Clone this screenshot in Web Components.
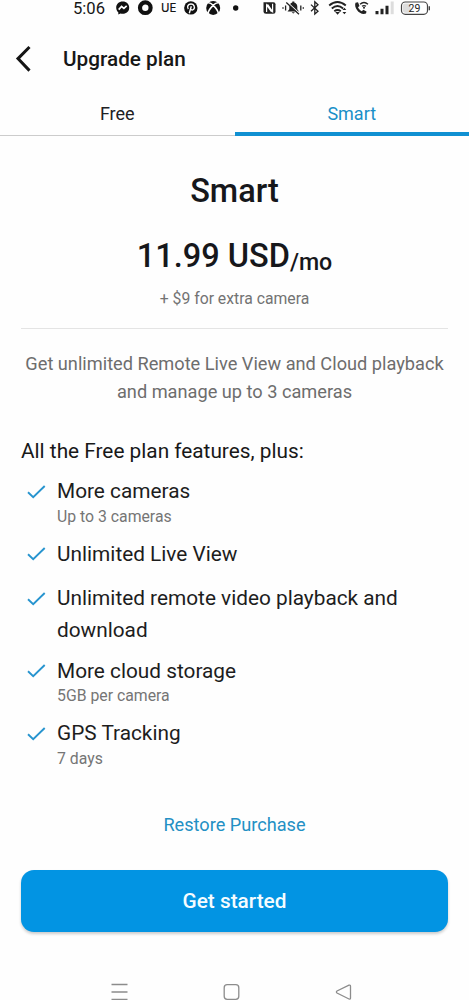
<!DOCTYPE html>
<html lang="en"><head><meta charset="utf-8"><title>Upgrade plan</title>
<style>html,body{margin:0;background:#fefefe}body{width:469px;height:1000px;overflow:hidden}</style></head><body>
<upgrade-screen></upgrade-screen>
<script>
const define=(name,css,html)=>customElements.define(name,class extends HTMLElement{
  constructor(){super();const t=document.createElement('template');
    t.innerHTML='<style>*{box-sizing:border-box}'+css+'</style>'+html;
    this.attachShadow({mode:'open'}).append(t.content.cloneNode(true));}
});

define('status-bar',`
:host{display:block;height:20px;padding-left:73px;color:#161616}
.row{display:flex;align-items:center;height:17px}
.time{font:16.6px/17px Roboto,sans-serif;width:43px;white-space:nowrap}
.ue{font:500 11.5px/17px Inter,sans-serif;width:22px;padding-left:0}
svg{display:block;flex:none}`,`
<div class="row"><span class="time">5:06</span>
<svg width="45" height="17" viewBox="0 0 45 17"><path d="M6.7 1.6C2.8 1.6.2 4.3.2 7.7c0 1.9.8 3.5 2.1 4.6v2.2l2.2-1c.7.2 1.4.3 2.2.3 3.9 0 6.5-2.7 6.5-6.1S10.600 1.600 6.700 1.600z" fill="#111"/><path d="M2.700 9.600 5.600 6.500 7.900 8.300 10.700 5.800" fill="none" stroke="#fff" stroke-width="1.700"/><circle cx="29.300" cy="7.700" r="5.300" fill="none" stroke="#111" stroke-width="4.200"/></svg>
<span class="ue">UE</span>
<svg width="62" height="17" viewBox="0 0 62 17"><circle cx="7.800" cy="7.900" r="6.700" fill="#111"/><path d="M5.300 9C3.700 6.800 5 4 8 4s4.200 3.200 2.800 5.100C9.800 10.400 8.300 10 7.900 9.200M8.300 6.300 6.300 13.300" fill="none" stroke="#fff" stroke-width="1.400"/><circle cx="30.200" cy="7.900" r="7" fill="#111"/><path d="M25 2.800c2.200-.2 4 1.300 5.200 2.500 1.200-1.200 3-2.700 5.200-2.500M25 13.500c.5-3.200 3-6.200 5.200-8.200 2.200 2 4.700 5 5.200 8.200" fill="none" stroke="#fff" stroke-width="1.600"/><circle cx="52.700" cy="8" r="2.700" fill="#111"/></svg>
<svg style="margin-left:17px" width="169" height="17" viewBox="262 0 169 17"><path d="M264 2.200h9.500q2 0 2 2v7.600q0 2-2 2H266q-2.500 0-2.500-2V2.200z" fill="#222"/><path d="M266.600 12V5l5 6.800M272.600 3.800v7.700L267.500 4.300" fill="none" stroke="#fff" stroke-width="1.200"/>
<path d="M287.500 11.500h11.500l-1.700-2.200V6.500c0-2-1.400-3.600-3-4V1.400h-2v1.100c-1.700.4-3 2-3 4v2.800zM291.700 12.300h3.200q-1.600 2.200-3.200 0z" fill="#222"/><path d="M287 2 300 14" stroke="#fff" stroke-width="1.200"/><path d="M286.300 2.500 299 14.200M285.600 5.500v5M283 7.300v1.500M300.800 5.500v5M303.300 7.300v1.500" fill="none" stroke="#222" stroke-width="1.300"/>
<path d="M311 4.600 318 11.200 314.800 14V1.800L318 4.700 311 11.300" fill="none" stroke="#222" stroke-width="1.300"/>
<path d="M329.200 5.500q8.200-7 16.600 0M331.800 8.400q5.700-4.700 11.300 0M334.300 11.200q3.300-2.500 6.500 0" fill="none" stroke="#222" stroke-width="1.900"/><path d="m335.200 12 2.400 2.700 2.300-2.700zM342.500 10l1.900-2.200 1.900 2.200zM342.500 12l1.900 2.200 1.900-2.200z" fill="#222"/>
<path d="M355.500 2.800 358 2.200l1.500 3.700-1.500 1.400c.8 1.700 2 3 3.800 3.900l1.500-1.500 3.200 1.700-.5 2.200c-6 2.300-12.500-5.500-10.500-10.800z" fill="#222"/><path d="M360 4.300q4-3.500 8 0M362 6.300q2-1.500 4 0" fill="none" stroke="#222" stroke-width="1.300"/><circle cx="364" cy="7.800" r="1" fill="#222"/>
<path d="M375.500 11h3v3.200h-3zM380.500 8.800h3v5.400h-3zM385.500 5.800h3v8.400h-3z" fill="#222"/><path d="M390.700 1.500h3v12.700h-3z" fill="#ddd"/>
<rect x="401.500" y="2" width="26" height="12.300" rx="3.800" fill="#fff" stroke="#444" stroke-width="1.200"/><rect x="403" y="3.500" width="7.500" height="9.300" rx="2" fill="#ddd"/><path d="M429.300 6.300v4" stroke="#444" stroke-width="1.400"/><text x="414.500" y="12" text-anchor="middle" font-family="Roboto,sans-serif" font-size="10.500" fill="#222">29</text></svg></div>`);

define('app-header',`
:host{display:flex;align-items:center;height:78px;padding-left:15px;font:500 20.75px/30px Roboto,sans-serif;color:#171717}
svg{width:48px;flex:none}`,`<svg width="48" height="30" viewBox="0 0 48 30"><path d="M14.500 3 3 14.600 14.500 26.600" fill="none" stroke="#151515" stroke-width="3"/></svg><slot></slot>`);

define('plan-tab',`
:host{display:block;flex:1;text-align:center;font:18px/31px Roboto,sans-serif;color:#202124;border-bottom:1.500px solid #ccc;height:37.500px}
:host([selected]){color:#198fc8;border-bottom:4px solid #1090d2;height:38px}`,`<slot></slot>`);

define('plan-price',`
:host{display:block;text-align:center;font-family:Roboto,sans-serif;color:#16171b}
h1{font:500 32.500px/40px Roboto,sans-serif;margin:0}
.price{display:flex;justify-content:center;margin-top:25px;font:500 32.500px/40px Roboto,sans-serif}
.price small{font-size:23.2px;line-height:52px;height:40px}
.extra{font-size:15.75px;line-height:22px;color:#737373;margin-top:12px}`,
`<h1><slot name="title"></slot></h1><div class="price"><span><slot name="amount"></slot></span><small><slot name="period"></slot></small></div><div class="extra"><slot name="extra"></slot></div>`);

define('plan-feature',`
:host{display:grid;grid-template-columns:36px 1fr;font:20.800px/31.500px Roboto,sans-serif;color:#1d1d1d}
svg{margin:7.500px 0 0 6px}
.sub{font-size:15.8px;line-height:18px;color:#757575}`,`<svg width="20" height="16" viewBox="0 0 20 16"><path d="M1 8.300 6.200 13.200 17.700 2" fill="none" stroke="#2794cf" stroke-width="1.900"/></svg><div><slot></slot><div class="sub"><slot name="sub"></slot></div></div>`);

define('primary-button',`
:host{display:flex;justify-content:center;align-items:center;height:62.500px;border-radius:13px;background:#0294e3;color:#f5fcff;font:500 20.800px/30px Roboto,sans-serif;box-shadow:0 2px 3px #0003}`,`<slot></slot>`);

define('nav-bar',`:host{display:block;height:20px}svg{display:block}`,`<svg width="469" height="20" viewBox="0 980 469 20"><g fill="none" stroke="#8c8c8c" stroke-width="1.300"><path d="M111.500 984.500h16M111.500 992h16M111.500 999.300h16"/><rect x="224.200" y="984.700" width="14.600" height="14.600" rx="3"/><path d="M349 985.200 337 991q-1.200 1 0 2l12 6q1.500.5 1.500-1V986.200q0-1.500-1.500-1z"/></g></svg>`);

define('upgrade-screen',`
:host{display:flex;flex-direction:column;width:469px;height:1000px;font-family:Roboto,sans-serif;background:#fefefe}
.tabs{display:flex;height:38px}
main{padding:0 21px}
plan-price{margin-top:35px}
hr{border:0;height:1px;background:#e4e4e4;margin:18px 0 0}
.desc{margin:21px -10px 0;text-align:center;font-size:18.200px;line-height:28px;color:#6d6d6d}
.lead{margin:29.500px 0 0;font-size:20.800px;line-height:31px;color:#181818}
.features{margin-top:9.500px}
.features plan-feature{margin-bottom:13px}
.restore{margin-top:44px;text-align:center;font-size:18.150px;line-height:26px;color:#2390c4}
primary-button{margin-top:32px}
nav-bar{margin-top:auto}`,`
<status-bar></status-bar><app-header>Upgrade plan</app-header>
<div class="tabs"><plan-tab>Free</plan-tab><plan-tab selected>Smart</plan-tab></div>
<main><plan-price><span slot="title">Smart</span><span slot="amount">11.99 USD</span><span slot="period">/mo</span><span slot="extra">+ $9 for extra camera</span></plan-price>
<hr><p class="desc">Get unlimited Remote Live View and Cloud playback<br>and manage up to 3 cameras</p>
<p class="lead">All the Free plan features, plus:</p>
<div class="features">
<plan-feature>More cameras<span slot="sub">Up to 3 cameras</span></plan-feature>
<plan-feature>Unlimited Live View</plan-feature>
<plan-feature style="margin-bottom:9.500px">Unlimited remote video playback and download</plan-feature>
<plan-feature>More cloud storage<span slot="sub">5GB per camera</span></plan-feature>
<plan-feature>GPS Tracking<span slot="sub">7 days</span></plan-feature></div>
<div class="restore">Restore Purchase</div><primary-button>Get started</primary-button></main>
<nav-bar></nav-bar>`);
</script></body></html>
